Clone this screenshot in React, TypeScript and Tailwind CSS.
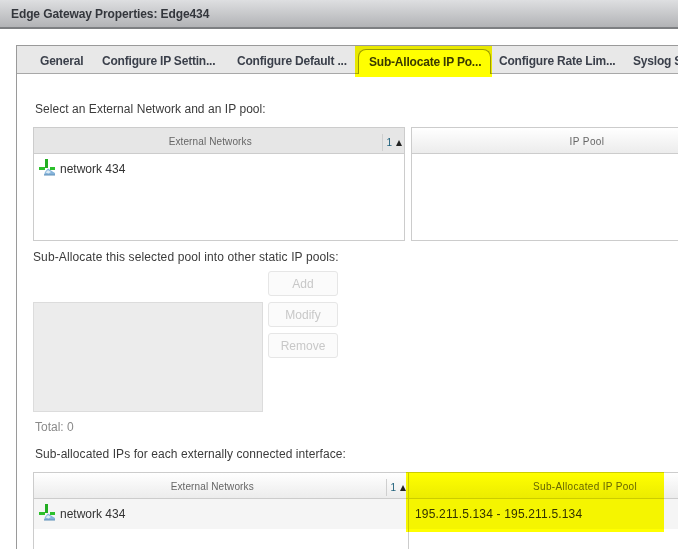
const font = "font-['Liberation_Sans',Arial,sans-serif]";

const NetworkIcon = () => (
  <svg width="17" height="17" viewBox="0 0 17 17" className="mb-[4px] shrink-0">
    <rect x="6" y="0" width="3" height="9" fill="#22ad22" />
    <path d="M5 16 L6 13 L9 9.5 L12 11.5 L16 14 L16 16 Z" fill="#86b4da" />
    <path d="M6.5 13.5 L9 11 L12 13 L9.5 14.5 Z" fill="#dcebf6" />
    <path d="M5 16 H16" stroke="#5f8fb8" strokeWidth="1" />
    <rect x="0" y="8" width="6" height="3" fill="#2cc02c" />
    <rect x="11" y="8" width="5" height="3" fill="#2cc02c" />
  </svg>
);

const SortMark = () => (
  <div className="mt-[4px] flex h-[17px] items-center border-l border-[#cfcfcf] pl-[3px] pr-[2px] text-[10px] leading-none text-[#333]">
    <span className="text-[#1d5f7a]">1</span>
    <svg width="6" height="6" viewBox="0 0 6 6" className="ml-[4px]">
      <path d="M3 0 L6 6 H0 Z" fill="#222" />
    </svg>
  </div>
);

const Tab = ({ label, className }: { label: string; className: string }) => (
  <div className={`shrink-0 whitespace-nowrap pt-[2px] text-[12px] font-bold leading-none tracking-[-0.2px] text-[#3a3f4a] ${className}`}>
    {label}
  </div>
);

const SideButton = ({ label }: { label: string }) => (
  <div className="flex h-[25px] w-[70px] items-center justify-center rounded-[3px] border border-[#e6e6e6] bg-[#fbfbfb] text-[12px] text-[#c8c8c8]">
    {label}
  </div>
);

export default function App() {
  return (
    <div className={`relative h-[549px] w-[678px] overflow-hidden bg-white ${font}`}>
      {/* Title bar */}
      <header className="flex h-[29px] items-center border-b-2 border-[#7d7f82] bg-gradient-to-b from-[#dedfe1] to-[#b2b3b6] pl-[11px] text-[12px] font-bold tracking-[-0.1px] text-[#33363c]">
        Edge Gateway Properties: Edge434
      </header>

      {/* Dialog panel */}
      <div className="ml-[16px] mt-[16px] w-[760px] border-l border-t border-[#9a9a9a]">
        {/* Tabs */}
        <div className="flex h-[28px] items-center border-b border-[#a8a8a8] bg-[#e8e8e8]">
          <Tab label="General" className="ml-[23px] w-[62px]" />
          <Tab label="Configure IP Settin..." className="w-[135px]" />
          <Tab label="Configure Default ..." className="w-[121px]" />
          <div className="-mb-[1px] flex h-[25px] w-[133px] shrink-0 items-center self-end rounded-t-[8px] border border-b-0 border-[#9b9b3c] bg-white pl-[10px] text-[12px] font-bold tracking-[-0.2px] text-[#3a3a20]">
            <span className="whitespace-nowrap">Sub-Allocate IP Po...</span>
          </div>
          <Tab label="Configure Rate Lim..." className="ml-[8px] w-[134px]" />
          <Tab label="Syslog Server Settings" className="" />
        </div>

        <div className="pl-[16px] text-[#3b3b3b]">
          <p className="mt-[28px] pl-[2px] text-[12px] leading-[14px] tracking-[0.05px]">Select an External Network and an IP pool:</p>

          {/* Network and pool tables */}
          <div className="mt-[11px] flex gap-[6px]">
            <div className="h-[114px] w-[372px] shrink-0 border border-[#cccccc]">
              <div className="flex h-[26px] items-center border-b border-[#cccccc] bg-[#e6e6e6]">
                <span className="flex-1 pl-[4px] pt-[2px] text-center text-[10px] tracking-[0.12px] text-[#666]">External Networks</span>
                <SortMark />
              </div>
              <div className="flex h-[30px] items-center gap-[4px] pl-[5px] text-[12px] text-[#333]">
                <NetworkIcon />
                network 434
              </div>
            </div>
            <div className="h-[114px] w-[352px] shrink-0 border border-[#cccccc]">
              <div className="flex h-[26px] items-center justify-center border-b border-[#cccccc] bg-gradient-to-b from-white to-[#ececec] pt-[2px] text-[10px] tracking-[0.4px] text-[#666]">
                IP Pool
              </div>
            </div>
          </div>

          <p className="mt-[9px] text-[12px] leading-[14px] tracking-[0.12px]">Sub-Allocate this selected pool into other static IP pools:</p>

          {/* Static pools */}
          <div className="mt-[7px] flex items-start gap-[5px]">
            <div className="mt-[31px] h-[110px] w-[230px] border border-[#dcdcdc] bg-[#ececec]" />
            <div className="flex flex-col gap-[6px]">
              <SideButton label="Add" />
              <SideButton label="Modify" />
              <SideButton label="Remove" />
            </div>
          </div>

          <p className="mt-[8px] pl-[2px] text-[12px] leading-[14px] text-[#8a8a8a]">Total: 0</p>
          <p className="mt-[13px] pl-[2px] text-[12px] leading-[14px] tracking-[0.07px]">Sub-allocated IPs for each externally connected interface:</p>

          {/* Sub-allocated table */}
          <div className="mt-[11px] w-[720px] border-l border-t border-[#cccccc]">
            <div className="flex h-[26px] border-b border-[#cccccc] bg-gradient-to-b from-white to-[#ececec]">
              <div className="flex w-[374px] items-center">
                <span className="flex-1 pl-[4px] pt-[2px] text-center text-[10px] tracking-[0.12px] text-[#666]">External Networks</span>
                <SortMark />
              </div>
              <div className="flex flex-1 items-center border-l border-[#cccccc] pl-[124px] pt-[2px] text-[10px] tracking-[0.33px] text-[#666]">
                Sub-Allocated IP Pool
              </div>
            </div>
            <div className="flex h-[30px] bg-[#f5f5f5] text-[12px] text-[#333]">
              <div className="flex w-[374px] items-center gap-[4px] pl-[5px]">
                <NetworkIcon />
                network 434
              </div>
              <div className="flex flex-1 items-center border-l border-[#cccccc] pl-[6px] tracking-[0.17px]">195.211.5.134 - 195.211.5.134</div>
            </div>
            <div className="ml-[374px] h-[40px] border-l border-[#cccccc]" />
          </div>
        </div>
      </div>

      {/* Yellow marker highlights drawn over the screenshot */}
      <div className="absolute left-[355px] top-[46px] h-[31px] w-[137px] bg-[#ffff00] mix-blend-multiply" />
      <div className="absolute left-[406px] top-[472px] h-[60px] w-[258px] bg-[#ffff00] mix-blend-multiply" />
    </div>
  );
}
